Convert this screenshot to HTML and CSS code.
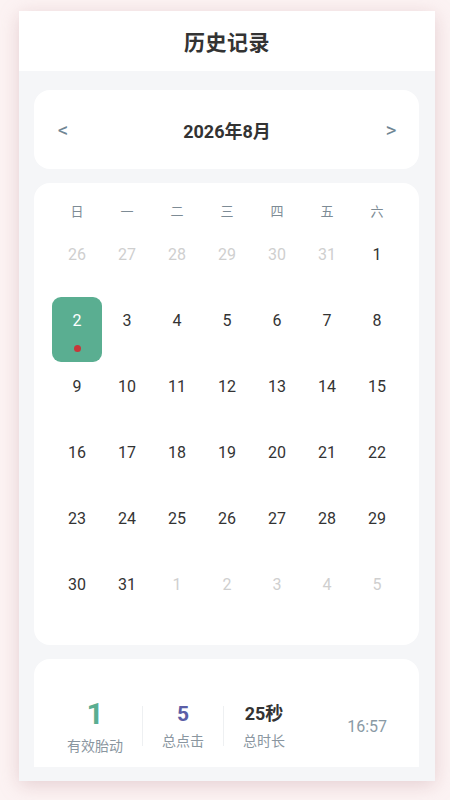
FILE: index.html
```html
<!DOCTYPE html>
<html lang="zh-CN">
<head>
<meta charset="utf-8">
<title>历史记录</title>
<link rel="stylesheet" href="styles.css">
</head>
<body>
<div class="phone">
  <header class="topbar">历史记录</header>
  <div class="content">
    <div class="scroll">
      <section class="card nav">
        <span class="arrow">&lt;</span>
        <span class="month">2026年8月</span>
        <span class="arrow">&gt;</span>
      </section>

      <section class="card calendar">
        <div class="weekdays">
          <span>日</span><span>一</span><span>二</span><span>三</span><span>四</span><span>五</span><span>六</span>
        </div>
        <div class="days">
          <div class="day other"><span class="num">26</span></div>
          <div class="day other"><span class="num">27</span></div>
          <div class="day other"><span class="num">28</span></div>
          <div class="day other"><span class="num">29</span></div>
          <div class="day other"><span class="num">30</span></div>
          <div class="day other"><span class="num">31</span></div>
          <div class="day"><span class="num">1</span></div>

          <div class="day selected"><span class="num">2</span><span class="dot"></span></div>
          <div class="day"><span class="num">3</span></div>
          <div class="day"><span class="num">4</span></div>
          <div class="day"><span class="num">5</span></div>
          <div class="day"><span class="num">6</span></div>
          <div class="day"><span class="num">7</span></div>
          <div class="day"><span class="num">8</span></div>

          <div class="day"><span class="num">9</span></div>
          <div class="day"><span class="num">10</span></div>
          <div class="day"><span class="num">11</span></div>
          <div class="day"><span class="num">12</span></div>
          <div class="day"><span class="num">13</span></div>
          <div class="day"><span class="num">14</span></div>
          <div class="day"><span class="num">15</span></div>

          <div class="day"><span class="num">16</span></div>
          <div class="day"><span class="num">17</span></div>
          <div class="day"><span class="num">18</span></div>
          <div class="day"><span class="num">19</span></div>
          <div class="day"><span class="num">20</span></div>
          <div class="day"><span class="num">21</span></div>
          <div class="day"><span class="num">22</span></div>

          <div class="day"><span class="num">23</span></div>
          <div class="day"><span class="num">24</span></div>
          <div class="day"><span class="num">25</span></div>
          <div class="day"><span class="num">26</span></div>
          <div class="day"><span class="num">27</span></div>
          <div class="day"><span class="num">28</span></div>
          <div class="day"><span class="num">29</span></div>

          <div class="day"><span class="num">30</span></div>
          <div class="day"><span class="num">31</span></div>
          <div class="day other"><span class="num">1</span></div>
          <div class="day other"><span class="num">2</span></div>
          <div class="day other"><span class="num">3</span></div>
          <div class="day other"><span class="num">4</span></div>
          <div class="day other"><span class="num">5</span></div>
        </div>
      </section>

      <section class="card stats">
        <div class="stat">
          <div class="value big green">1</div>
          <div class="label">有效胎动</div>
        </div>
        <span class="divider"></span>
        <div class="stat">
          <div class="value purple">5</div>
          <div class="label">总点击</div>
        </div>
        <span class="divider"></span>
        <div class="stat">
          <div class="value dark">25秒</div>
          <div class="label">总时长</div>
        </div>
        <div class="time">16:57</div>
      </section>
    </div>
  </div>
</div>
</body>
</html>
```

FILE: styles.css
```css
* {
  box-sizing: border-box;
}

html, body {
  margin: 0;
  padding: 0;
}

body {
  width: 450px;
  height: 800px;
  background: #fcf3f3;
  font-family: Roboto, "Noto Sans CJK SC", sans-serif;
  color: #333;
  overflow: hidden;
}

.phone {
  width: 416px;
  height: 770px;
  margin: 11px 0 0 19px;
  background: #f5f6f8;
  display: flex;
  flex-direction: column;
  box-shadow: 0 4px 18px rgba(190, 140, 150, 0.35);
}

.topbar {
  height: 60px;
  flex: 0 0 60px;
  background: #fff;
  display: flex;
  align-items: center;
  justify-content: center;
  font-size: 21px;
  font-weight: 700;
  color: #333;
  letter-spacing: 0.5px;
}

.content {
  flex: 1;
  padding: 0 16px 14px 15px;
  display: flex;
  flex-direction: column;
  min-height: 0;
}

.scroll {
  flex: 1;
  overflow: hidden;
  padding-top: 19px;
  display: flex;
  flex-direction: column;
  gap: 14px;
}

.card {
  background: #fff;
  border-radius: 16px;
  flex: 0 0 auto;
}

.nav {
  height: 79px;
  display: flex;
  align-items: center;
  justify-content: space-between;
  padding: 0 21px 0 22px;
}

.arrow {
  font-size: 21px;
  color: #6f8694;
  width: 14px;
  text-align: center;
}

.month {
  font-size: 18px;
  font-weight: 700;
  color: #333;
}

.calendar {
  height: 462px;
  padding: 14px 17px 0 18px;
}

.weekdays {
  display: grid;
  grid-template-columns: repeat(7, 1fr);
  height: 30px;
  margin-bottom: 4px;
}

.weekdays span {
  font-size: 13px;
  line-height: 30px;
  text-align: center;
  color: #7d8b95;
}

.days {
  display: grid;
  grid-template-columns: repeat(7, 1fr);
  grid-auto-rows: 65px;
  row-gap: 1px;
}

.day {
  display: flex;
  flex-direction: column;
  align-items: center;
  padding-top: 13px;
  border-radius: 9px;
}

.num {
  font-size: 16px;
  line-height: 22px;
  color: #333;
}

.day.other .num {
  color: #cfcfcf;
}

.day.selected {
  background: #5aae91;
}

.day.selected .num {
  color: #fff;
}

.dot {
  width: 7px;
  height: 7px;
  border-radius: 50%;
  background: #c7373a;
  margin-top: 13px;
}

.stats {
  height: 134px;
  border-radius: 16px 16px 0 0;
  display: flex;
  align-items: center;
  padding: 0 0 0 14px;
}

.stat {
  padding: 0 19px;
  text-align: center;
}

.value {
  font-weight: 700;
}

.value.big {
  font-size: 30px;
  line-height: 36px;
}

.value.green {
  color: #5aae91;
}

.value.purple {
  color: #5b5ea6;
  font-size: 21px;
  line-height: 26px;
}

.value.dark {
  color: #333;
  font-size: 18px;
  line-height: 26px;
}

.label {
  font-size: 14px;
  line-height: 20px;
  color: #8a96a0;
  margin-top: 4px;
}

.divider {
  width: 1px;
  height: 40px;
  background: #eef0f2;
}

.time {
  margin-left: auto;
  padding-right: 32px;
  font-size: 16px;
  color: #8a9aa5;
}
```
